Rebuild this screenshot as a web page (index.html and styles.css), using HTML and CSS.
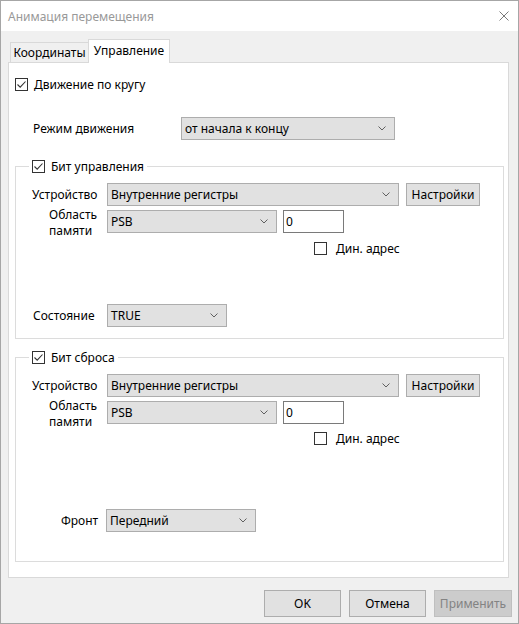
FILE: index.html
```html
<!DOCTYPE html>
<html lang="ru">
<head>
<meta charset="utf-8">
<title>Анимация перемещения</title>
<link rel="stylesheet" href="styles.css">
</head>
<body>
<div class="window">
  <div class="titlebar">
    <span class="title">Анимация перемещения</span>
    <svg class="close" width="10" height="10" viewBox="0 0 10 10"><path d="M0.5 0.5L9.5 9.5M9.5 0.5L0.5 9.5" stroke="#7a7a7a" stroke-width="1" fill="none"/></svg>
  </div>
  <div class="client">
    <div class="tabs">
      <div class="tab tab-coord">Координаты</div>
      <div class="tab active">Управление</div>
    </div>
    <div class="panel">
      <div class="check">
        <span class="box"><svg width="11" height="11" viewBox="0 0 11 11"><path d="M1.5 5.5L4.2 8.2L9.5 2.5" stroke="#333" stroke-width="1.1" fill="none"/></svg></span>
        <span class="check-text">Движение по кругу</span>
      </div>
      <div class="row mode-row">
        <span class="lbl mode-lbl">Режим движения</span>
        <div class="combo w-mode"><span>от начала к концу</span><svg class="chev" width="8" height="5" viewBox="0 0 8 5"><path d="M0.5 0.5L4 4L7.5 0.5" stroke="#606060" stroke-width="1" fill="none"/></svg></div>
      </div>

      <div class="group g1">
        <div class="legend">
          <span class="box"><svg width="11" height="11" viewBox="0 0 11 11"><path d="M1.5 5.5L4.2 8.2L9.5 2.5" stroke="#333" stroke-width="1.1" fill="none"/></svg></span>
          <span>Бит управления</span>
        </div>
        <div class="row">
          <span class="lbl">Устройство</span>
          <div class="combo w-dev"><span>Внутренние регистры</span><svg class="chev" width="8" height="5" viewBox="0 0 8 5"><path d="M0.5 0.5L4 4L7.5 0.5" stroke="#606060" stroke-width="1" fill="none"/></svg></div>
          <div class="btn btn-setup">Настройки</div>
        </div>
        <div class="row row-mem">
          <span class="lbl lbl-mem"><span class="ln">Область</span><span class="ln">памяти</span></span>
          <div class="combo w-psb"><span>PSB</span><svg class="chev" width="8" height="5" viewBox="0 0 8 5"><path d="M0.5 0.5L4 4L7.5 0.5" stroke="#606060" stroke-width="1" fill="none"/></svg></div>
          <div class="input">0</div>
        </div>
        <div class="check dyn">
          <span class="box"></span>
          <span class="dyn-text">Дин. адрес</span>
        </div>
        <div class="row row-state">
          <span class="lbl lbl-state">Состояние</span>
          <div class="combo w-state"><span>TRUE</span><svg class="chev" width="8" height="5" viewBox="0 0 8 5"><path d="M0.5 0.5L4 4L7.5 0.5" stroke="#606060" stroke-width="1" fill="none"/></svg></div>
        </div>
      </div>

      <div class="group g2">
        <div class="legend">
          <span class="box"><svg width="11" height="11" viewBox="0 0 11 11"><path d="M1.5 5.5L4.2 8.2L9.5 2.5" stroke="#333" stroke-width="1.1" fill="none"/></svg></span>
          <span>Бит сброса</span>
        </div>
        <div class="row">
          <span class="lbl">Устройство</span>
          <div class="combo w-dev"><span>Внутренние регистры</span><svg class="chev" width="8" height="5" viewBox="0 0 8 5"><path d="M0.5 0.5L4 4L7.5 0.5" stroke="#606060" stroke-width="1" fill="none"/></svg></div>
          <div class="btn btn-setup">Настройки</div>
        </div>
        <div class="row row-mem">
          <span class="lbl lbl-mem"><span class="ln">Область</span><span class="ln">памяти</span></span>
          <div class="combo w-psb"><span>PSB</span><svg class="chev" width="8" height="5" viewBox="0 0 8 5"><path d="M0.5 0.5L4 4L7.5 0.5" stroke="#606060" stroke-width="1" fill="none"/></svg></div>
          <div class="input">0</div>
        </div>
        <div class="check dyn dyn2">
          <span class="box"></span>
          <span class="dyn-text">Дин. адрес</span>
        </div>
        <div class="row row-front">
          <span class="lbl lbl-front">Фронт</span>
          <div class="combo w-front"><span>Передний</span><svg class="chev" width="8" height="5" viewBox="0 0 8 5"><path d="M0.5 0.5L4 4L7.5 0.5" stroke="#606060" stroke-width="1" fill="none"/></svg></div>
        </div>
      </div>
    </div>
    <div class="buttons">
      <div class="btn btn-ok">OK</div>
      <div class="btn btn-cancel">Отмена</div>
      <div class="btn btn-apply disabled">Применить</div>
    </div>
  </div>
</div>
</body>
</html>
```

FILE: styles.css
```css
* { box-sizing: border-box; }

html, body {
  margin: 0;
  padding: 0;
}

body {
  width: 519px;
  height: 624px;
  font-family: "Noto Sans", "Open Sans", "DejaVu Sans", sans-serif;
  font-size: 12px;
  color: #000;
  background: #f0f0f0;
  overflow: hidden;
}

/* dialog frame */
.window {
  width: 519px;
  height: 624px;
  border: 1px solid #a6a6a6;
  display: flex;
  flex-direction: column;
  background: #f0f0f0;
}

.titlebar {
  height: 30px;
  flex: none;
  background: #fff;
  display: flex;
  align-items: center;
  justify-content: space-between;
  padding: 0 9px 0 7px;
}

.title {
  color: #999;
}

.close { display: block; }

.client {
  flex: 1;
  display: flex;
  flex-direction: column;
  padding: 8px 0 0 7px;
}

/* tab strip */
.tabs {
  display: flex;
  align-items: flex-end;
  height: 23px;
  margin-left: 2px;
  position: relative;
  z-index: 1;
}

.tab {
  height: 20px;
  border: 1px solid #d9d9d9;
  border-bottom: none;
  background: #f0f0f0;
  display: flex;
  align-items: center;
  justify-content: center;
  white-space: nowrap;
}

.tab-coord { width: 79px; }

.tab.active {
  width: 82px;
  height: 24px;
  margin-left: -1px;
  margin-bottom: -1px;
  background: #fff;
  padding-bottom: 2px;
}

.panel {
  width: 501px;
  height: 516px;
  border: 1px solid #d9d9d9;
  background: #fff;
  padding: 15px 0 0 6px;
  display: flex;
  flex-direction: column;
  align-items: flex-start;
}

/* checkboxes */
.check {
  display: flex;
  align-items: center;
  height: 13px;
  white-space: nowrap;
}

.box {
  width: 13px;
  height: 13px;
  flex: none;
  border: 1px solid #333;
  background: #fff;
  display: block;
}

.box svg { display: block; }

.check-text { margin-left: 6px; }

.dyn {
  margin-top: 9px;
  margin-left: 282px;
}

.dyn2 { margin-top: 8px; }

.dyn-text { margin-left: 9px; }

/* form rows */
.row {
  display: flex;
  align-items: center;
  height: 23px;
  white-space: nowrap;
}

.lbl { width: 75px; flex: none; }

.mode-row {
  margin-top: 26px;
  margin-left: 18px;
}

.mode-lbl { width: 148px; }

.row-mem { margin-top: 4px; }

.lbl-mem {
  padding-left: 17px;
  display: flex;
  flex-direction: column;
  margin-top: 2px;
}

.lbl-mem .ln {
  display: block;
  height: 16px;
  line-height: 16px;
}

.row-state { margin-top: 49px; }
.lbl-state { padding-left: 1px; }

.row-front { margin-top: 64px; }
.lbl-front { padding-left: 29px; width: 74px; }

.combo {
  height: 23px;
  border: 1px solid #adadad;
  background: #e1e1e1;
  display: flex;
  align-items: center;
  justify-content: space-between;
  padding: 0 8px 0 3px;
  flex: none;
}

.chev { display: block; }

.w-mode { width: 214px; }
.w-dev { width: 292px; }
.w-psb { width: 170px; }
.w-state { width: 120px; }
.w-front { width: 150px; }

.input {
  width: 61px;
  height: 23px;
  margin-left: 6px;
  border: 1px solid #7a7a7a;
  background: #fff;
  padding-left: 2px;
  display: flex;
  align-items: center;
}

.btn {
  height: 23px;
  border: 1px solid #adadad;
  background: #e1e1e1;
  display: flex;
  align-items: center;
  justify-content: center;
  flex: none;
  white-space: nowrap;
}

.btn-setup {
  width: 74px;
  margin-left: 7px;
}

/* group boxes */
.group {
  position: relative;
  width: 489px;
  border: 1px solid #dcdcdc;
  padding: 16px 0 0 16px;
  display: flex;
  flex-direction: column;
  align-items: flex-start;
}

.g1 { margin-top: 26px; height: 173px; }
.g2 { margin-top: 18px; height: 205px; }

.legend {
  position: absolute;
  top: -7px;
  left: 13px;
  height: 13px;
  padding: 0 3px;
  background: #fff;
  display: flex;
  align-items: center;
  gap: 6px;
  white-space: nowrap;
}

/* dialog buttons */
.buttons {
  display: flex;
  justify-content: flex-end;
  gap: 8px;
  margin-top: 12px;
  padding-right: 6px;
}

.buttons .btn { height: 27px; }

.btn-ok, .btn-cancel { width: 77px; }
.btn-apply { width: 78px; }

.btn.disabled {
  background: #cccccc;
  border-color: #bfbfbf;
  color: #838383;
}
```
